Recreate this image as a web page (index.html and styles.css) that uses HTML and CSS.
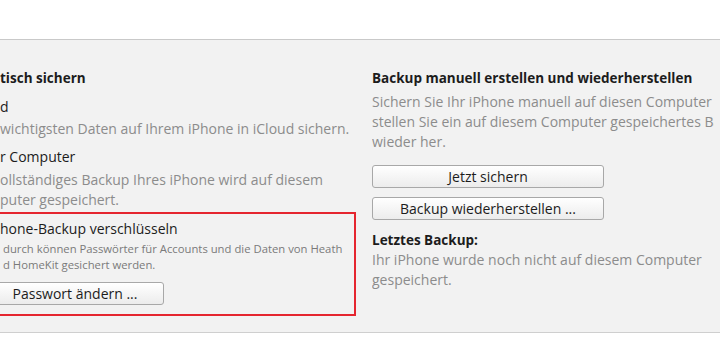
FILE: index.html
```html
<!DOCTYPE html>
<html lang="de">
<head>
<meta charset="utf-8">
<link rel="stylesheet" href="styles.css">
</head>
<body>
<div class="top"></div>
<div class="panel">
  <div class="col left">
    <div class="heading">tisch sichern</div>
    <div class="label l-icloud">d</div>
    <div class="desc d-icloud">wichtigsten Daten auf Ihrem iPhone in iCloud sichern.</div>
    <div class="label l-comp">r Computer</div>
    <div class="desc d-comp">ollständiges Backup Ihres iPhone wird auf diesem<br>puter gespeichert.</div>
    <div class="encrypt">
      <div class="label">hone-Backup verschlüsseln</div>
      <div class="small">durch können Passwörter für Accounts und die Daten von Heath<br>d HomeKit gesichert werden.</div>
      <button class="btn btn-pw">Passwort ändern ...</button>
    </div>
  </div>
  <div class="col right">
    <div class="heading">Backup manuell erstellen und wiederherstellen</div>
    <div class="desc d-manual">Sichern Sie Ihr iPhone manuell auf diesen Computer oder<br>stellen Sie ein auf diesem Computer gespeichertes Backup<br>wieder her.</div>
    <button class="btn btn-wide b-now">Jetzt sichern</button>
    <button class="btn btn-wide b-restore">Backup wiederherstellen ...</button>
    <div class="heading last">Letztes Backup:</div>
    <div class="desc d-last">Ihr iPhone wurde noch nicht auf diesem Computer<br>gespeichert.</div>
  </div>
</div>
</body>
</html>
```
FILE: styles.css
```css
html, body {
  margin: 0;
  padding: 0;
  background: #ffffff;
  width: 720px;
  height: 340px;
  overflow: hidden;
  font-family: "Open Sans", "Noto Sans", sans-serif;
  font-size: 14px;
  color: #1c1c1c;
}
.top {
  height: 39px;
}
.panel {
  border-top: 1px solid #c9c9c9;
  border-bottom: 1px solid #cfcfcf;
  background: #f2f2f2;
  height: 292px;
  display: grid;
  grid-template-columns: 356px 342px;
  column-gap: 16px;
  overflow: hidden;
}
.col {
  padding-top: 28px;
  white-space: nowrap;
  min-width: 0;
}
.right {
  overflow: hidden;
}
.heading {
  font-weight: 700;
  font-size: 13.5px;
  line-height: 20px;
  height: 20px;
}
.label {
  line-height: 20px;
}
.desc {
  color: #8c8c8c;
  line-height: 20px;
}
.l-icloud { margin-top: 9px; }
.d-icloud { margin-top: 2px; }
.l-comp { margin-top: 8px; }
.d-comp { margin-top: 3px; }
.encrypt {
  margin-top: 2px;
  margin-left: -30px;
  padding: 5px 0 9px 28px;
  border: 2px solid #e5262f;
}
.small {
  margin-top: 2px;
  font-size: 11.3px;
  line-height: 16px;
  color: #7a7a7a;
  letter-spacing: 0;
  padding-left: 3px;
}
.btn {
  display: block;
  box-sizing: border-box;
  height: 23px;
  padding: 0;
  border: 1px solid #a8a8a8;
  border-radius: 3px;
  background: linear-gradient(#ffffff, #ececec);
  font-family: inherit;
  font-size: 14px;
  color: #1c1c1c;
  line-height: 21px;
  text-align: center;
}
.btn-pw {
  margin-top: 9px;
  margin-left: -14px;
  width: 178px;
}
.btn-wide {
  width: 232px;
}
.d-manual { margin-top: 4px; }
.b-now { margin-top: 13px; }
.b-restore { margin-top: 9px; }
.heading.last { margin-top: 10px; }
.d-last { margin-top: 0; }
```
